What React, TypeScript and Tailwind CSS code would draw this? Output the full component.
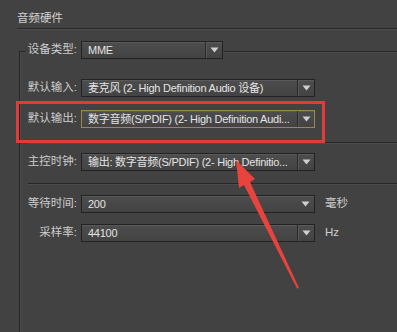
const font = { fontFamily: '"Liberation Sans", "Noto Sans CJK SC", sans-serif' };

type SelectProps = {
  value: string;
  width: string;
  divider?: boolean;
  highlight?: boolean;
};

function Caret() {
  return (
    <svg width="9" height="6" viewBox="0 0 9 6">
      <path d="M0.5 0.5h8L4.5 5.5z" fill="#cfcfcf" />
    </svg>
  );
}

function Select({ value, width, divider = true, highlight = false }: SelectProps) {
  return (
    <div
      className={`${width} flex h-[18px] shrink-0 items-stretch border ${
        highlight ? "border-[#9c8651]" : "border-[#222222]"
      } bg-gradient-to-b from-[#4d4d4d] to-[#434343] shadow-[inset_0_1px_0_#5a5a5a]`}
    >
      <div className="flex min-w-0 flex-1 items-center overflow-hidden whitespace-nowrap pl-[6px] text-[11px] leading-none tracking-[-0.25px] text-[#e4e4e4]">
        {value}
      </div>
      <div
        className={`flex w-[17px] items-center justify-center ${
          divider ? "border-l border-[#2a2a2a] shadow-[inset_1px_0_0_#585858]" : ""
        }`}
      >
        <Caret />
      </div>
    </div>
  );
}

function Row({ label, children, className = "" }: { label: string; children: React.ReactNode; className?: string }) {
  return (
    <div className={`flex items-center ${className}`}>
      <div className="w-[57px] text-right text-[11.5px] leading-none text-[#cdcdcd]">{label}</div>
      <div className="ml-[4px] flex items-center">{children}</div>
    </div>
  );
}

function Divider({ className = "" }: { className?: string }) {
  return (
    <div className={className}>
      <div className="h-px bg-[#272727]" />
      <div className="h-px bg-[#4b4b4b]" />
    </div>
  );
}

export default function App() {
  return (
    <div className="relative h-[332px] w-[397px] overflow-hidden bg-[#424242] pt-[11px]" style={font}>
      <div className="pl-[17px] text-[11.5px] leading-[14px] text-[#d2d2d2]">音频硬件</div>
      <Divider className="ml-[17px] mt-[3px]" />

      <div className="ml-[19px] mt-[21px] h-[300px] border-l border-t border-[#272727] shadow-[inset_1px_1px_0_#4b4b4b]">
        {/* legend sits on the group's top border */}
        <div className="-mt-[11px] flex items-center">
          <div className="flex w-[57px] justify-end">
            <span className="bg-[#424242] pl-[2px] text-[11.5px] leading-none text-[#cdcdcd]">设备类型:</span>
          </div>
          <div className="bg-[#424242] pl-[4px] pr-[1px]">
            <Select value="MME" width="w-[142px]" />
          </div>
        </div>

        <Row label="默认输入:" className="mt-[20px]">
          <Select value="麦克风 (2- High Definition Audio 设备)" width="w-[234px]" />
        </Row>
        <Row label="默认输出:" className="mt-[13px]">
          <Select value="数字音频(S/PDIF) (2- High Definition Audi..." width="w-[234px]" highlight />
        </Row>
        <Divider className="ml-[8px] mt-[14px]" />
        <Row label="主控时钟:" className="mt-[9px]">
          <Select value="输出: 数字音频(S/PDIF) (2- High Definitio..." width="w-[234px]" />
        </Row>
        <Divider className="ml-[8px] mt-[12px]" />
        <Row label="等待时间:" className="mt-[10px]">
          <Select value="200" width="w-[234px]" divider={false} />
          <span className="ml-[10px] text-[11.5px] leading-none text-[#cdcdcd]">毫秒</span>
        </Row>
        <Row label="采样率:" className="mt-[11px]">
          <Select value="44100" width="w-[234px]" />
          <span className="ml-[10px] text-[11.5px] leading-none text-[#cdcdcd]">Hz</span>
        </Row>
      </div>

      {/* annotation overlay */}
      <div className="absolute left-[16px] top-[101px] h-[42px] w-[309px] border-[3px] border-[#e23b3b]" />
      <svg className="absolute left-0 top-0" width="397" height="332" viewBox="0 0 397 332">
        <path d="M236 160 L255 179 L250 182 L299 288 L297 288.5 L244 185 L239 188 Z" fill="#e8433d" />
      </svg>
    </div>
  );
}
